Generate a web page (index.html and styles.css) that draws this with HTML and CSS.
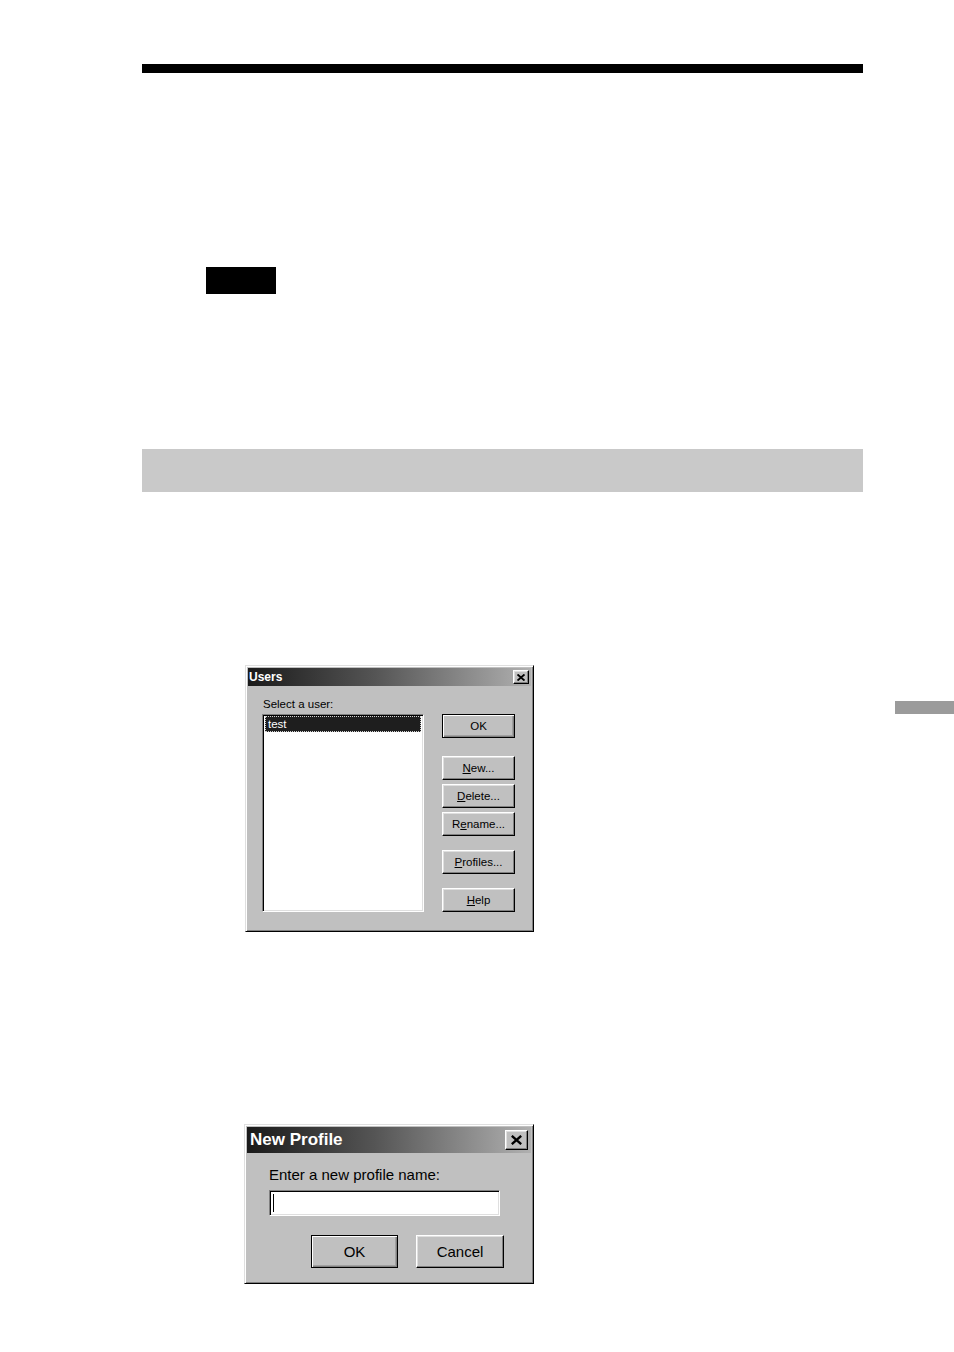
FILE: index.html
```html
<!DOCTYPE html>
<html lang="en">
<head>
<meta charset="utf-8">
<title>Users</title>
<link rel="stylesheet" href="styles.css">
</head>
<body>
<div class="page">
  <div class="rule"></div>
  <div class="note-label"></div>
  <div class="section-bar"></div>

  <div class="users-row">
    <div class="dialog users-dialog">
      <div class="titlebar users-title">
        <span class="title-text">Users</span>
        <span class="close-btn small-close">
          <svg width="8" height="7" viewBox="0 0 8 7"><path d="M0.5 0.5 L7.5 6.5 M7.5 0.5 L0.5 6.5" stroke="#000" stroke-width="1.9" fill="none"/></svg>
        </span>
      </div>
      <div class="users-body">
        <div class="list-col">
          <div class="field-label">Select a user:</div>
          <div class="listbox">
            <div class="list-item">test</div>
          </div>
        </div>
        <div class="btn-col">
          <div class="btn btn-default">OK</div>
          <div class="btn gap-lg"><u>N</u>ew...</div>
          <div class="btn gap-sm"><u>D</u>elete...</div>
          <div class="btn gap-sm">R<u>e</u>name...</div>
          <div class="btn gap-md"><u>P</u>rofiles...</div>
          <div class="btn gap-md"><u>H</u>elp</div>
        </div>
      </div>
    </div>
    <div class="edge-tab"></div>
  </div>

  <div class="dialog profile-dialog">
    <div class="titlebar profile-title">
      <span class="title-text">New Profile</span>
      <span class="close-btn big-close">
        <svg width="11" height="10" viewBox="0 0 11 10"><path d="M0.8 0.8 L10.2 9.2 M10.2 0.8 L0.8 9.2" stroke="#000" stroke-width="2.3" fill="none"/></svg>
      </span>
    </div>
    <div class="profile-body">
      <div class="profile-label">Enter a new profile name:</div>
      <div class="textbox"><span class="caret"></span></div>
      <div class="profile-buttons">
        <div class="btn big-btn btn-default">OK</div>
        <div class="btn big-btn">Cancel</div>
      </div>
    </div>
  </div>
</div>
</body>
</html>
```

FILE: styles.css
```css
html, body {
  margin: 0;
  padding: 0;
  background: #ffffff;
}

.page {
  width: 954px;
  height: 1352px;
  padding-top: 64px;
  box-sizing: border-box;
  font-family: "Liberation Sans", Arial, sans-serif;
}

.rule {
  margin-left: 142px;
  width: 721px;
  height: 9px;
  background: #000;
}

.note-label {
  margin-top: 194px;
  margin-left: 206px;
  width: 70px;
  height: 27px;
  background: #000;
}

.section-bar {
  margin-top: 155px;
  margin-left: 142px;
  width: 721px;
  height: 43px;
  background: #c9c9c9;
}

.users-row {
  display: flex;
  align-items: flex-start;
  margin-top: 173px;
}

.dialog {
  box-sizing: border-box;
  background: #c0c0c0;
  border: 1px solid;
  border-color: #dfdfdf #000 #000 #dfdfdf;
  box-shadow: inset 1px 1px 0 #fff, inset -1px -1px 0 #808080;
  padding: 2px;
}

.users-dialog {
  margin-left: 245px;
  width: 289px;
  height: 267px;
}

.edge-tab {
  margin-left: 361px;
  margin-top: 36px;
  width: 59px;
  height: 13px;
  background: #9b9b9b;
}

.titlebar {
  display: flex;
  align-items: center;
  justify-content: space-between;
  background: linear-gradient(to right, #1a1a1a 0%, #555555 45%, #b0b0b0 100%);
  color: #fff;
  font-weight: bold;
}

.users-title {
  height: 18px;
  font-size: 12px;
  padding-left: 1px;
  padding-right: 2px;
}

.profile-title {
  height: 26px;
  font-size: 17px;
  padding-left: 3px;
  padding-right: 3px;
}

.close-btn {
  box-sizing: border-box;
  display: flex;
  align-items: center;
  justify-content: center;
  background: #c0c0c0;
  border: 1px solid;
  border-color: #fff #000 #000 #fff;
  box-shadow: inset -1px -1px 0 #808080, inset 1px 1px 0 #dfdfdf;
}

.small-close {
  width: 16px;
  height: 14px;
}

.big-close {
  width: 23px;
  height: 20px;
}

.users-body {
  display: flex;
  padding-left: 14px;
}

.list-col {
  display: flex;
  flex-direction: column;
}

.field-label {
  margin-top: 11px;
  padding-left: 1px;
  height: 14px;
  line-height: 14px;
  font-size: 11.5px;
  color: #000;
}

.listbox {
  box-sizing: border-box;
  margin-top: 3px;
  width: 162px;
  height: 198px;
  background: #fff;
  border: 1px solid;
  border-color: #808080 #fff #fff #808080;
  box-shadow: inset 1px 1px 0 #000, inset -1px -1px 0 #dfdfdf;
  padding: 1px 2px 2px 2px;
}

.list-item {
  box-sizing: border-box;
  height: 16px;
  line-height: 14px;
  background: #1e1e1e;
  color: #fff;
  font-size: 11.5px;
  padding-left: 2px;
  border: 1px dotted #d0d0d0;
}

.btn-col {
  display: flex;
  flex-direction: column;
  margin-left: 18px;
  padding-top: 28px;
}

.btn {
  box-sizing: border-box;
  width: 73px;
  height: 24px;
  display: flex;
  align-items: center;
  justify-content: center;
  font-size: 11.5px;
  color: #000;
  background: #c0c0c0;
  border: 1px solid;
  border-color: #fff #000 #000 #fff;
  box-shadow: inset -1px -1px 0 #808080, inset 1px 1px 0 #dfdfdf;
}

.btn-default {
  border-color: #000;
  box-shadow: inset 1px 1px 0 #fff, inset -1px -1px 0 #808080, inset -2px -2px 0 #a0a0a0;
}

.gap-sm { margin-top: 4px; }
.gap-md { margin-top: 14px; }
.gap-lg { margin-top: 18px; }

.profile-dialog {
  margin-top: 192px;
  margin-left: 244px;
  width: 290px;
  height: 160px;
}

.profile-body {
  display: flex;
  flex-direction: column;
  padding-left: 22px;
}

.profile-label {
  margin-top: 13px;
  height: 18px;
  line-height: 18px;
  font-size: 15px;
  color: #000;
}

.textbox {
  box-sizing: border-box;
  margin-top: 6px;
  width: 231px;
  height: 26px;
  background: #fff;
  border: 1px solid;
  border-color: #808080 #fff #fff #808080;
  box-shadow: inset 1px 1px 0 #000, inset -1px -1px 0 #dfdfdf;
  display: flex;
  align-items: center;
  padding-left: 3px;
}

.caret {
  width: 1px;
  height: 18px;
  background: #000;
}

.profile-buttons {
  display: flex;
  gap: 18px;
  margin-top: 19px;
  padding-left: 42px;
}

.big-btn {
  width: 87px;
  height: 33px;
  font-size: 15px;
}

.big-btn + .big-btn {
  width: 88px;
}
```
